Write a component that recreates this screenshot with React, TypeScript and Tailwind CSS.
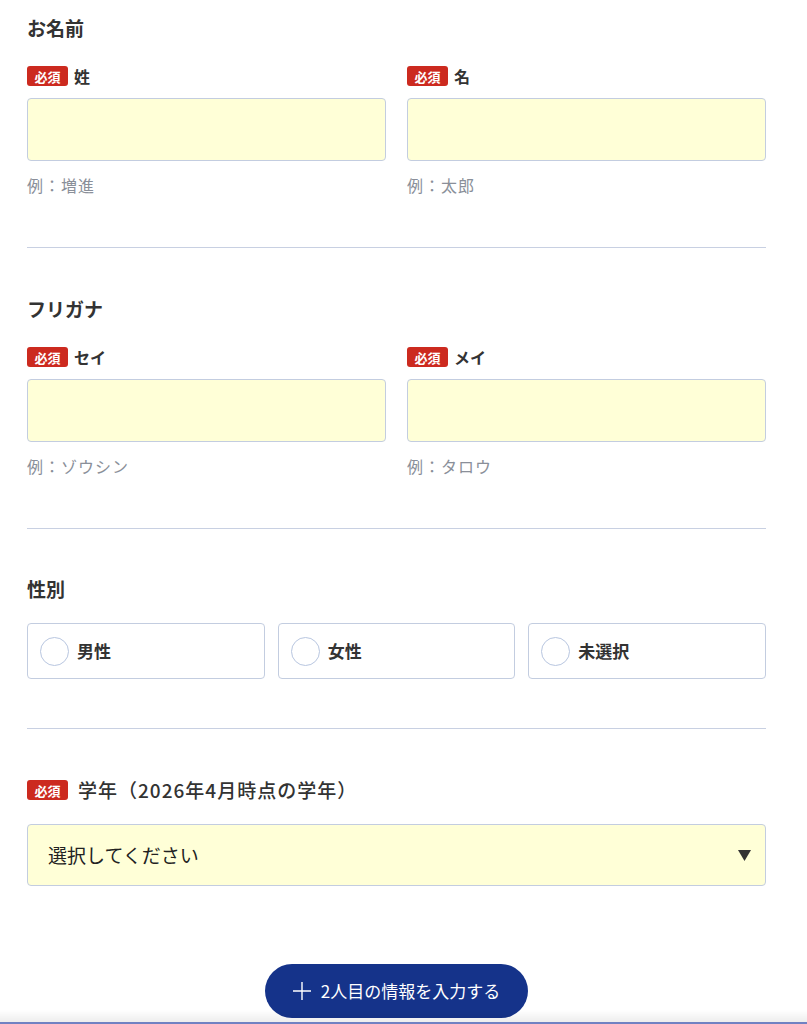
import React from "react";

const font = { fontFamily: '"Noto Sans CJK JP", "Noto Sans", sans-serif' };

function Badge() {
  return (
    <span className="inline-flex h-[20px] w-[41px] items-center justify-center rounded-[3px] bg-[#cc2a1f] text-[13px] font-bold leading-none text-white">
      必須
    </span>
  );
}

function Field({ label, example }: { label: string; example: string }) {
  return (
    <div className="flex flex-col">
      <div className="flex h-[24px] items-center gap-[6px]">
        <Badge />
        <span className="text-[16px] font-bold text-[#333]">{label}</span>
      </div>
      <div className="mt-[10px] h-[63px] rounded-[4px] border border-[#c3cde0] bg-[#ffffd7]" />
      <div className="mt-[13px] text-[16px] leading-[22px] tracking-[1px] text-[#8a8f99]">{example}</div>
    </div>
  );
}

function Heading({ children }: { children: React.ReactNode }) {
  return <h2 className="h-[27px] text-[19px] font-bold leading-[25px] text-[#333]">{children}</h2>;
}

function Divider() {
  return <div className="h-px bg-[#c8d0e2]" />;
}

function Radio({ label }: { label: string }) {
  return (
    <div className="flex h-[56px] items-center rounded-[4px] border border-[#c3cde0] bg-white pl-[12px]">
      <span className="h-[29px] w-[29px] rounded-full border border-[#b8c6e0] bg-white" />
      <span className="ml-[8px] text-[17px] font-bold text-[#333]">{label}</span>
    </div>
  );
}

export default function App() {
  return (
    <div className="relative min-h-[1024px] bg-white" style={font}>
      <div className="ml-[27px] w-[739px] pb-[40px]">
        {/* お名前 */}
        <section className="pt-[15px] pb-[51px]">
          <Heading>お名前</Heading>
          <div className="mt-[22px] grid grid-cols-2 gap-x-[21px]">
            <Field label="姓" example="例：増進" />
            <Field label="名" example="例：太郎" />
          </div>
        </section>
        <Divider />
        {/* フリガナ */}
        <section className="pt-[48px] pb-[51px]">
          <Heading>フリガナ</Heading>
          <div className="mt-[22px] grid grid-cols-2 gap-x-[21px]">
            <Field label="セイ" example="例：ゾウシン" />
            <Field label="メイ" example="例：タロウ" />
          </div>
        </section>
        <Divider />
        {/* 性別 */}
        <section className="pt-[47px] pb-[49px]">
          <Heading>性別</Heading>
          <div className="mt-[20px] grid grid-cols-3 gap-x-[13px]">
            <Radio label="男性" />
            <Radio label="女性" />
            <Radio label="未選択" />
          </div>
        </section>
        <Divider />
        {/* 学年 */}
        <section className="pt-[47px]">
          <div className="flex h-[28px] items-center gap-[10px]">
            <Badge />
            <span className="text-[19px] font-medium leading-[28px] tracking-[1px] text-[#333]">
              学年（2026年4月時点の学年）
            </span>
          </div>
          <div className="mt-[20px] flex h-[62px] items-center justify-between rounded-[4px] border border-[#c3cde0] bg-[#ffffd7] pl-[20px] pr-[14px]">
            <span className="text-[19px] text-[#222]">選択してください</span>
            <svg width="13" height="11" viewBox="0 0 13 11">
              <path d="M0 0 H13 L6.5 11 Z" fill="#333" />
            </svg>
          </div>
          <div className="mt-[78px] flex justify-center">
            <button className="flex h-[54px] w-[263px] items-center justify-center gap-[10px] rounded-full bg-[#15338a] text-[17px] text-white">
              <svg width="18" height="18" viewBox="0 0 18 18">
                <path d="M9 0 V18 M0 9 H18" stroke="white" strokeWidth="1.4" />
              </svg>
              <span>2人目の情報を入力する</span>
            </button>
          </div>
        </section>
      </div>
      <div className="pointer-events-none fixed bottom-0 left-0 right-0">
        <div className="h-[12px] bg-gradient-to-b from-[rgba(0,0,0,0)] to-[rgba(0,0,0,0.07)]" />
        <div className="h-[2px] bg-[#7081c2]" />
      </div>
    </div>
  );
}
